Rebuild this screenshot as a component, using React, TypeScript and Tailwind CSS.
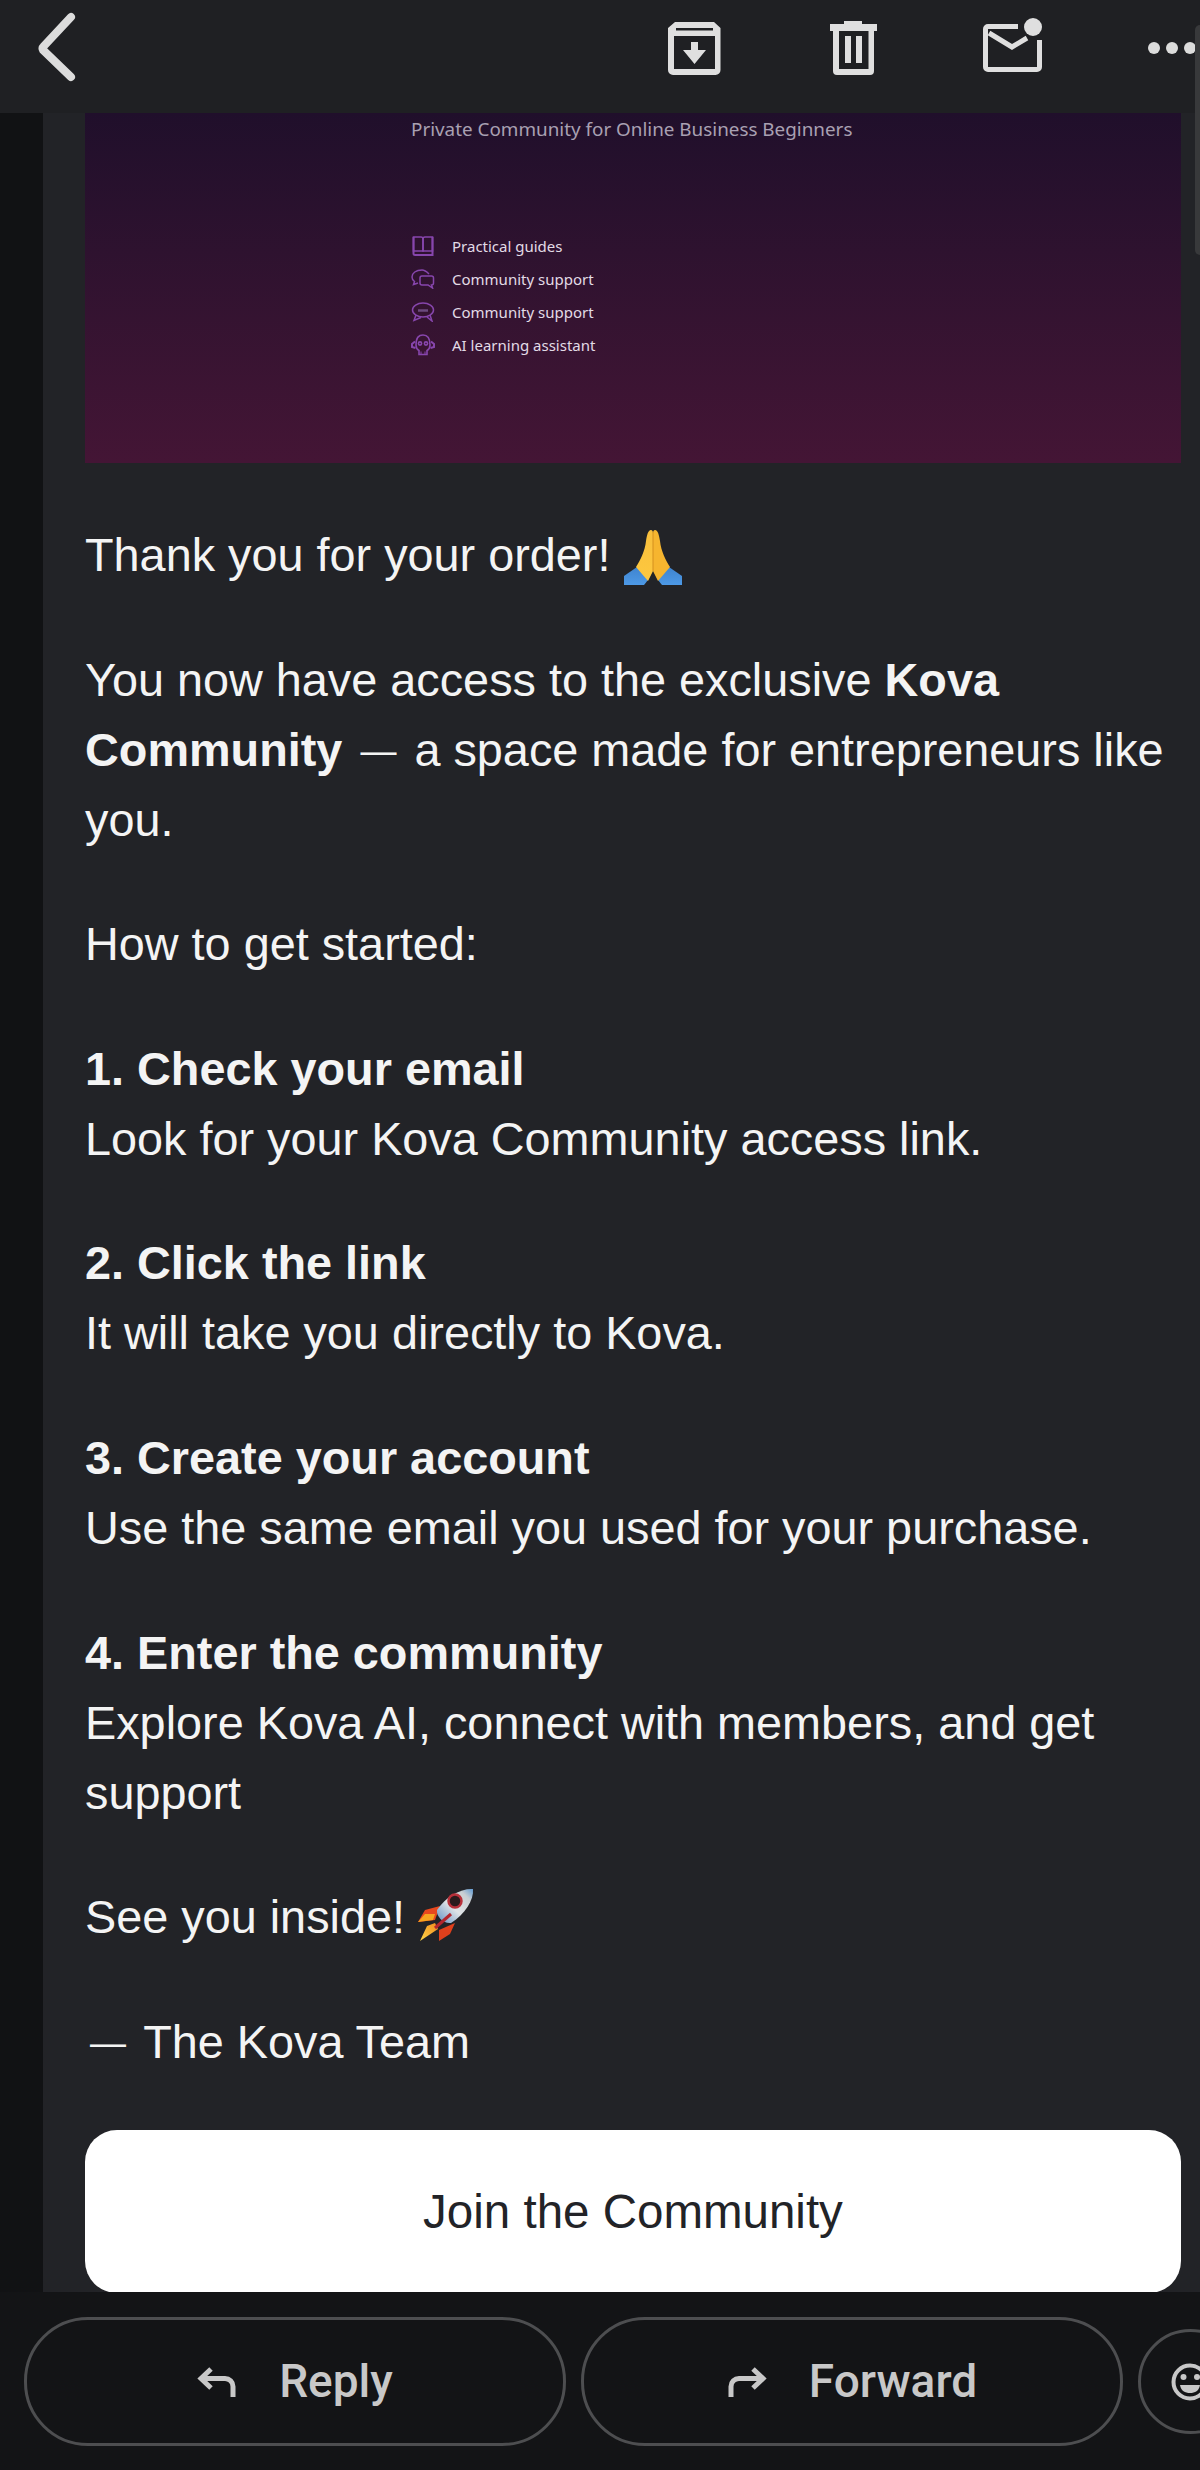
const steps = [
  { title: '1. Check your email', body: 'Look for your Kova Community access link.' },
  { title: '2. Click the link', body: 'It will take you directly to Kova.' },
  { title: '3. Create your account', body: 'Use the same email you used for your purchase.' },
  { title: '4. Enter the community', body: 'Explore Kova AI, connect with members, and get support' },
]

function BackIcon() {
  return (
    <svg width="44" height="70" viewBox="0 0 44 70" fill="none" className="ml-[36px] mt-[12px] shrink-0">
      <path d="M35 5 L7 35 Q6 36 7 38 L35 65" stroke="#dcdcdc" strokeWidth="8" strokeLinecap="round" />
    </svg>
  )
}

function ArchiveIcon() {
  return (
    <svg width="53" height="53" viewBox="0 0 53 53" className="ml-[588px] mt-[22px] shrink-0">
      <path
        fill="#dfdfdf"
        fillRule="evenodd"
        d="M7 0 H46 L52.5 6 V48 a5 5 0 0 1 -5 5 H5 a5 5 0 0 1 -5 -5 V6 Z M8 6 H45 V8.5 H8 Z M6 14 H47 V47 H6 Z"
      />
      <path fill="#dfdfdf" d="M23 20 H30 V28 H38 L26.5 42 L15 28 H23 Z" />
    </svg>
  )
}

function TrashIcon() {
  return (
    <svg width="47" height="54" viewBox="0 0 47 54" className="ml-[109px] mt-[21px] shrink-0">
      <path
        fill="#dfdfdf"
        fillRule="evenodd"
        d="M14 0 H32 V3 H47 V10 H44 V50 a4 4 0 0 1 -4 4 H7 a4 4 0 0 1 -4 -4 V10 H0 V3 H14 Z M9 10 V48 H38.5 V10 Z M15 15 H21 V42 H15 Z M26 15 H32 V42 H26 Z"
      />
    </svg>
  )
}

function MailIcon() {
  return (
    <svg width="59" height="54" viewBox="0 0 59 54" fill="none" className="ml-[106px] mt-[18px] shrink-0">
      <path
        d="M35 8.5 H5 a2.5 2.5 0 0 0 -2.5 2.5 V49 a2.5 2.5 0 0 0 2.5 2.5 H54 a2.5 2.5 0 0 0 2.5 -2.5 V22"
        stroke="#dfdfdf"
        strokeWidth="5"
      />
      <path d="M6 15 L29 29 L44 20" stroke="#dfdfdf" strokeWidth="5" />
      <circle cx="50" cy="9" r="9" fill="#dfdfdf" />
    </svg>
  )
}

function BookIcon() {
  return (
    <svg width="22" height="20" viewBox="0 0 22 20" fill="none" stroke="#8746ad" strokeWidth="1.6" className="shrink-0">
      <path d="M1.5 1 H9 Q11 1 11 3 V15 H1.5 Z" />
      <path d="M20.5 1 H13 Q11 1 11 3 V15 H20.5 Z" />
      <path d="M1.5 1 V17.5 Q1.5 19 3 19 H20.5 V1" strokeWidth="2" />
    </svg>
  )
}

function ChatsIcon() {
  return (
    <svg width="24" height="20" viewBox="0 0 24 20" fill="none" stroke="#8746ad" strokeWidth="1.5" className="shrink-0">
      <path d="M11 1 C5 1 1 4 1 8 C1 10 2 11.5 3.5 12.5 L2.5 15.5 L7 14" />
      <path d="M18 5 C15.5 2.5 14 1 11 1" />
      <path d="M11 7 H20.5 Q22.5 7 22.5 9 V14 Q22.5 16 20.5 16 L21.5 19 L17 16 H11 Q9 16 9 14 V9 Q9 7 11 7 Z" />
    </svg>
  )
}

function ChatLinesIcon() {
  return (
    <svg width="24" height="20" viewBox="0 0 24 20" fill="none" stroke="#8746ad" strokeWidth="1.5" className="shrink-0">
      <ellipse cx="12" cy="8" rx="10.5" ry="7" />
      <path d="M5 13 L3 18.5 L10 15.5 M16 15 L21 19 L19 13" />
      <path d="M7 8.5 H17" strokeWidth="2.5" stroke="#6b4a7e" />
    </svg>
  )
}

function BotIcon() {
  return (
    <svg width="24" height="22" viewBox="0 0 24 22" fill="none" stroke="#8746ad" strokeWidth="1.6" className="shrink-0">
      <path d="M5 11 C5 3 8 1 12 1 C16 1 19 3 19 11 C19 14 17 16 16 16.5 V20.5 H8 V16.5 C7 16 5 14 5 11 Z" />
      <circle cx="9" cy="9.5" r="1.6" />
      <circle cx="15" cy="9.5" r="1.6" />
      <path d="M4 7.5 L1 10 V13 L4.5 14 M20 7.5 L23 10 V13 L19.5 14" strokeWidth="2" />
      <path d="M10 20.5 V17.5 M14 20.5 V17.5" strokeWidth="1" />
    </svg>
  )
}

const bannerRows = [
  { icon: <BookIcon />, label: 'Practical guides' },
  { icon: <ChatsIcon />, label: 'Community support' },
  { icon: <ChatLinesIcon />, label: 'Community support' },
  { icon: <BotIcon />, label: 'AI learning assistant' },
]

function PrayEmoji() {
  return (
    <svg width="58" height="56" viewBox="0 0 58 56" className="ml-[1px] inline-block align-[-14px]">
      <defs>
        <linearGradient id="hand" x1="0" y1="0" x2="0" y2="1">
          <stop offset="0" stopColor="#f9bf3c" />
          <stop offset="1" stopColor="#fdc83f" />
        </linearGradient>
        <linearGradient id="sleeve" x1="0" y1="0" x2="0" y2="1">
          <stop offset="0" stopColor="#3f84cf" />
          <stop offset="1" stopColor="#4d99e6" />
        </linearGradient>
      </defs>
      <path d="M0 47 L13 38 L24 51 L20 56 H0 Z" fill="url(#sleeve)" />
      <path d="M58 47 L45 38 L34 51 L38 56 H58 Z" fill="url(#sleeve)" />
      <path d="M27 1 C24 1 23 6 22 12 C21 22 16 32 12 38 L24 52 L29 42 V4 C29 2 28 1 27 1 Z" fill="url(#hand)" />
      <path d="M31 1 C34 1 35 6 36 12 C37 22 42 32 46 38 L34 52 L29 42 V4 C29 2 30 1 31 1 Z" fill="#f6b52f" />
      <path d="M29 3 V42" stroke="#d4901f" strokeWidth="1" />
    </svg>
  )
}

function RocketEmoji() {
  return (
    <svg width="56" height="54" viewBox="0 0 56 54" className="inline-block align-[-9px]">
      <defs>
        <linearGradient id="rocketBody" x1="0" y1="1" x2="1" y2="0">
          <stop offset="0" stopColor="#5f8fc4" />
          <stop offset="0.45" stopColor="#dfe3e6" />
          <stop offset="0.8" stopColor="#c9ced2" />
          <stop offset="1" stopColor="#5f9bd4" />
        </linearGradient>
        <linearGradient id="flame" x1="0" y1="1" x2="1" y2="0">
          <stop offset="0" stopColor="#ffd84a" />
          <stop offset="1" stopColor="#f08a1d" />
        </linearGradient>
      </defs>
      <path d="M0 34 L7 22 L22 18 L17 32 Z" fill="#e8481e" />
      <path d="M0 34 L7 26 L17 26 L15 32 Z" fill="#f7a41f" />
      <path d="M21 53 L21 42 L37 35 L32 46 Z" fill="#e0401c" />
      <path d="M2 53 L9 38 L17 35 L20 41 Z" fill="url(#flame)" />
      <path d="M55 1 C44 0 28 8 19 22 C18 28 25 36 33 35 C47 26 56 12 55 1 Z" fill="url(#rocketBody)" />
      <path d="M17 40 L33 26" stroke="#b3262e" strokeWidth="3" />
      <circle cx="37" cy="13" r="6.5" fill="#2b1a1c" stroke="#b8303a" strokeWidth="2.5" />
    </svg>
  )
}

function Dash() {
  return <span className="mx-[5px] align-[3px] text-[36px] leading-none">—</span>
}

function App() {
  return (
    <div className="relative flex h-[2470px] w-[1200px] flex-col overflow-hidden bg-[#131416] font-['Liberation_Sans',Arial,sans-serif]">
      {/* top toolbar */}
      <header className="flex h-[113px] shrink-0 items-start bg-[#1f2023]">
        <BackIcon />
        <ArchiveIcon />
        <TrashIcon />
        <MailIcon />
        <div className="ml-[106px] mt-[42px] flex gap-[6px]">
          <div className="h-[12px] w-[12px] rounded-full bg-[#dcdcdc]" />
          <div className="h-[12px] w-[12px] rounded-full bg-[#dcdcdc]" />
          <div className="h-[12px] w-[12px] rounded-full bg-[#dcdcdc]" />
        </div>
      </header>

      {/* scroll indicator */}
      <div className="absolute right-0 top-[25px] h-[230px] w-[5px] rounded-l-[5px] bg-[#38393b]" />

      <main className="flex min-h-0 flex-1 overflow-hidden">
        <div className="w-[43px] shrink-0 bg-[#111214]" />
        <article className="flex-1 bg-[#222327] pl-[42px] pr-[19px]">
          <section className="h-[350px] bg-gradient-to-b from-[#200f2b] to-[#441535] pl-[326px] pt-[2px] font-['Noto_Sans',sans-serif]">
            <p className="text-[18.85px] leading-[28px] text-[#a9a0b2]">Private Community for Online Business Beginners</p>
            <ul className="mt-[89px] flex flex-col gap-[5px]">
              {bannerRows.map((row, index) => (
                <li key={index} className="flex h-[28px] items-center gap-[18px] text-[15px] text-[#e2dbe6]">
                  <span className="flex w-[23px] justify-center">{row.icon}</span>
                  {row.label}
                </li>
              ))}
            </ul>
          </section>

          <div className="mt-[57px] text-[46.8px] leading-[70px] text-[#f4f4f4]">
            <p>
              Thank you for your order! <PrayEmoji />
            </p>
            <p className="mt-[54.6px]">
              You now have access to the exclusive <b>Kova Community</b> <Dash /> a space made for entrepreneurs like you.
            </p>
            <p className="mt-[54.6px]">How to get started:</p>
            {steps.map((step) => (
              <p key={step.title} className="mt-[54.6px]">
                <b>{step.title}</b>
                <br />
                {step.body}
              </p>
            ))}
            <p className="mt-[54.6px]">
              See you inside! <RocketEmoji />
            </p>
            <p className="mt-[54.6px]">
              <Dash /> The Kova Team
            </p>
          </div>

          <button className="mt-[53px] flex h-[163px] w-full items-center justify-center rounded-[32px] bg-white text-[47.5px] text-[#222327]">
            Join the Community
          </button>
        </article>
      </main>

      {/* reply bar */}
      <footer className="flex h-[178px] shrink-0 items-start gap-[15px] pl-[24px] pt-[25px] font-['Roboto',sans-serif] text-[46px] font-medium text-[#c8c8c8]">
        <button className="flex h-[129px] w-[542px] shrink-0 items-center justify-center gap-[42px] rounded-[64px] border-[3px] border-[#4d4e50]">
          <svg width="40" height="30" viewBox="0 0 40 30" fill="none" stroke="#c8c8c8" strokeWidth="5">
            <path d="M14 2 L4 11.5 L14 21" />
            <path d="M4 11.5 H28 a8 8 0 0 1 8 8 V30" />
          </svg>
          Reply
        </button>
        <button className="flex h-[129px] w-[542px] shrink-0 items-center justify-center gap-[42px] rounded-[64px] border-[3px] border-[#4d4e50]">
          <svg width="40" height="30" viewBox="0 0 40 30" fill="none" stroke="#c8c8c8" strokeWidth="5">
            <path d="M26 2 L36 11.5 L26 21" />
            <path d="M36 11.5 H12 a8 8 0 0 0 -8 8 V30" />
          </svg>
          Forward
        </button>
        <button className="mt-[12px] flex h-[105px] w-[105px] shrink-0 items-center rounded-full border-[3px] border-[#4d4e50] pl-[30px]">
          <svg width="38" height="38" viewBox="0 0 38 38" fill="none" className="shrink-0">
            <circle cx="19" cy="19" r="16.5" stroke="#c8c8c8" strokeWidth="4" />
            <circle cx="12.5" cy="14" r="3" fill="#c8c8c8" />
            <circle cx="26" cy="14" r="3" fill="#c8c8c8" />
            <path d="M9 22 H29 C28 28 24 30 19 30 C14 30 10 28 9 22 Z" fill="#c8c8c8" />
          </svg>
        </button>
      </footer>
    </div>
  )
}

export default App
